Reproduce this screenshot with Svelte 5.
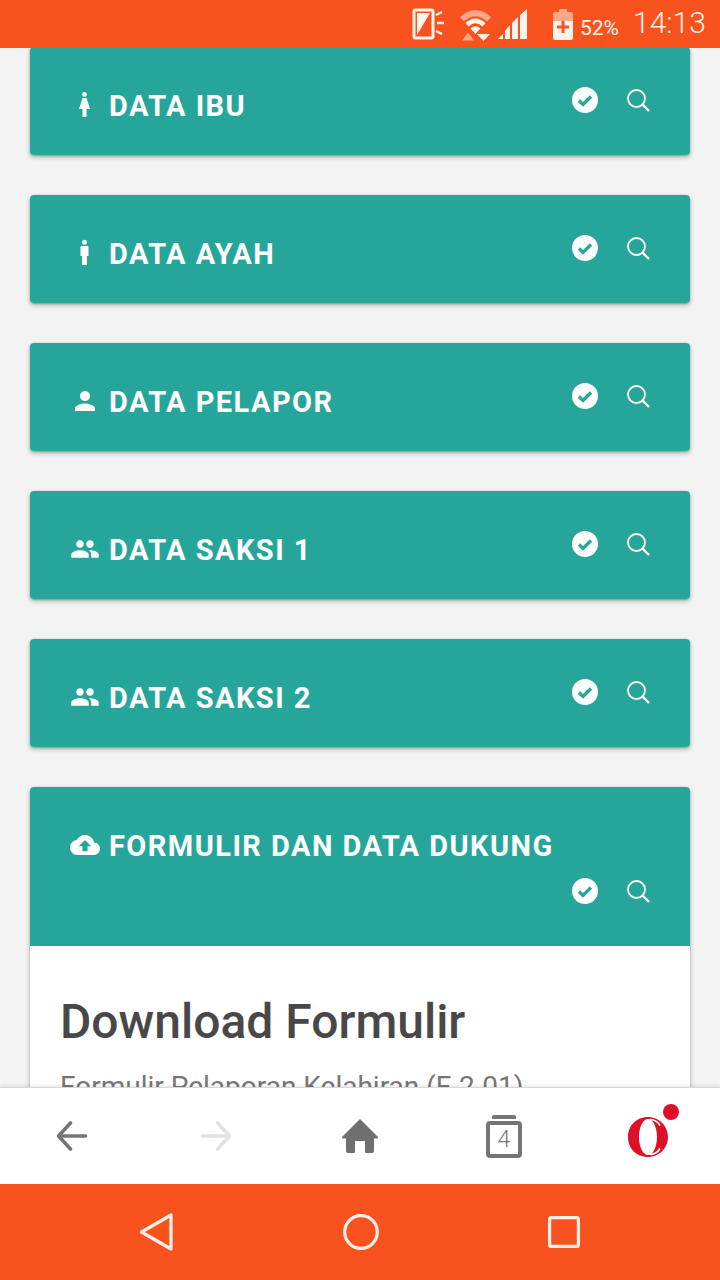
<script>
  const cards = [
    { title: 'DATA IBU', icon: 'female' },
    { title: 'DATA AYAH', icon: 'male' },
    { title: 'DATA PELAPOR', icon: 'person' },
    { title: 'DATA SAKSI 1', icon: 'people' },
    { title: 'DATA SAKSI 2', icon: 'people' },
    { title: 'FORMULIR DAN DATA DUKUNG', icon: 'cloud' }
  ];
  const paths = {
    female: 'M14.500 2a2.400 2.400 0 1 1 0 4.800 2.400 2.400 0 0 1 0-4.800zM12.500 8h4l3.500 11h-3.500V27h-4V19H9z',
    male: 'M14.500 1.800a2.500 2.500 0 1 1 0 5 2.500 2.500 0 0 1 0-5zM11 8h7q.5 0 .5.5V18h-1.500V27h-5V18H10.500V8.500q0-.5.5-.5z',
    person: 'M12 12c2.210 0 4-1.790 4-4s-1.790-4-4-4-4 1.790-4 4 1.790 4 4 4zm0 2c-2.670 0-8 1.340-8 4v2h16v-2c0-2.660-5.330-4-8-4z',
    people: 'M16 11c1.660 0 2.990-1.340 2.990-3S17.660 5 16 5c-1.660 0-3 1.340-3 3s1.340 3 3 3zm-8 0c1.660 0 2.990-1.340 2.990-3S9.660 5 8 5C6.340 5 5 6.340 5 8s1.340 3 3 3zm0 2c-2.330 0-7 1.170-7 3.500V19h14v-2.500c0-2.330-4.670-3.500-7-3.500zm8 0c-.290 0-.620.020-.970.050 1.160.840 1.970 1.970 1.970 3.450V19h6v-2.500c0-2.330-4.670-3.500-7-3.500z',
    cloud: 'M19.350 10.040C18.670 6.590 15.640 4 12 4 9.110 4 6.600 5.640 5.350 8.040 2.340 8.360 0 10.910 0 14c0 3.310 2.690 6 6 6h13c2.760 0 5-2.240 5-5 0-2.640-2.050-4.780-4.650-4.960zM14 13v4h-4v-4H7l5-5 5 5h-3z'
  };
  const box = { female: '0 0 30 30', male: '0 0 30 30', person: '0 0 24 24', people: '0 0 24 24', cloud: '0 0 24 24' };
</script>

<div class="screen">
  <header class="status">
    <svg class="s-rotate" width="33" height="34" viewBox="0 0 33 34">
      <rect x="2" y="3" width="19" height="28" rx="1.500" fill="none" stroke="#fff3ec" stroke-width="3" />
      <path d="M5 28V6h13z" fill="#fff3ec" />
      <path d="M24 8l6-3M25 16h7M24 24l6 3" stroke="#fff3ec" stroke-width="2.400" fill="none" />
    </svg>
    <svg class="s-wifi" width="33" height="34" viewBox="0 0 33 34">
      <path d="M1 10Q16.500 -4 32 10L28 14.500Q16.500 4 5 14.500z" fill="#fda78a" />
      <path d="M6.500 16Q16.500 7 26.500 16L23.500 19.500Q16.500 13 9.500 19.500z" fill="#fff3ec" />
      <path d="M11.500 21.500Q16.500 17 21.500 21.500L16.500 27z" fill="#fff3ec" />
      <path d="M3 33.500L9 25.500L15 33.500z" fill="#fda78a" />
      <path d="M18 27h13l-6.500 7z" fill="#fff3ec" />
    </svg>
    <svg class="s-signal" width="29" height="30" viewBox="0 0 29 30">
      <path d="M0 30L5 25V30zM7 30V22L12 16V30zM14 30V14L20 8V30zM22 30V6L29 0V30z" fill="#fff3ec" />
    </svg>
    <svg class="s-batt" width="20" height="31" viewBox="0 0 20 31">
      <path d="M6 0h8v3h4q2 0 2 2v7H0V5q0-2 2-2h4z" fill="#fda78a" />
      <path d="M0 12h20v17q0 2-2 2H2q-2 0-2-2z" fill="#fff3ec" />
      <path d="M8.500 12h3v4.500H16v3h-4.500V24h-3v-4.500H4v-3h4.500z" fill="#f8531e" />
    </svg>
    <span class="pct">52%</span>
    <span class="time">14:13</span>
  </header>

  <main class="content">
    {#each cards as c}
      <section class="card">
        <div class="head">
          <h2 class="title">
            <span class="t-icon">
              <svg width="30" height="30" viewBox={box[c.icon]}><path d={paths[c.icon]} fill="#fff" /></svg>
            </span>
            <span class="t-text">{c.title}</span>
          </h2>
          <div class="actions">
            <svg width="26" height="26" viewBox="0 0 26 26">
              <circle cx="13" cy="13" r="13" fill="#fff" />
              <path d="M7 13.500L11 17.500l8-8" fill="none" stroke="#26a69a" stroke-width="3.200" />
            </svg>
            <svg class="search" width="26" height="26" viewBox="0 0 26 26">
              <circle cx="11.500" cy="10.500" r="8.500" fill="none" stroke="#fff" stroke-width="1.800" />
              <path d="M17.500 16.500L24 23" stroke="#fff" stroke-width="2.400" />
            </svg>
          </div>
        </div>
        {#if c.icon === 'cloud'}
          <div class="body">
            <h1>Download Formulir</h1>
            <p>Formulir Pelaporan Kelahiran (F-2.01)</p>
          </div>
        {/if}
      </section>
    {/each}
  </main>

  <nav class="browser">
    <svg width="36" height="36" viewBox="0 0 36 36">
      <path d="M31.500 18H5M16.500 5L4.500 18L16.500 31" fill="none" stroke="#757575" stroke-width="3.600" stroke-linecap="round" stroke-linejoin="round" />
    </svg>
    <svg width="36" height="36" viewBox="0 0 36 36">
      <path d="M4.500 18H31M19.500 5L31.500 18L19.500 31" fill="none" stroke="#e2e2e2" stroke-width="3.600" stroke-linecap="round" stroke-linejoin="round" />
    </svg>
    <svg width="38" height="36" viewBox="0 0 38 36">
      <path d="M19 1L37 19q.5 1.500-1 1.500h-3V33q0 2-2 2h-6q-1 0-1-1V23h-10v11q0 1-1 1H7q-2 0-2-2V20.500H2q-1.500 0-1-1.500z" fill="#6f6f6f" />
    </svg>
    <div class="tabs">
      <span class="tab-lid"></span>
      <span class="tab-box">4</span>
    </div>
    <svg class="opera" width="54" height="54" viewBox="0 0 54 54">
      <circle cx="44" cy="8" r="8" fill="#dc1028" />
      <path fill-rule="evenodd" d="M21 13C9 13 1 22 1 33s8 20 20 20c11 0 20-9 20-20S32 13 21 13zM21 15c-5 0-9 8-9 18s4 18 9 18 9-8 9-18-4-18-9-18z" fill="#dc1028" />
      <path d="M23 15.500q7 .5 10 6M23 50.500q7-.5 10-6" fill="none" stroke="#fff" stroke-width="1.600" />
    </svg>
  </nav>

  <footer class="sysnav">
    <svg width="34" height="40" viewBox="0 0 34 40">
      <path d="M2.500 20L32 3V37z" fill="none" stroke="#fff1ea" stroke-width="3.200" stroke-linejoin="round" />
    </svg>
    <svg width="36" height="36" viewBox="0 0 36 36">
      <circle cx="18" cy="18" r="16.300" fill="none" stroke="#fff1ea" stroke-width="3.200" />
    </svg>
    <svg width="32" height="32" viewBox="0 0 32 32">
      <rect x="1.600" y="1.600" width="28.800" height="28.800" rx="2" fill="none" stroke="#fff1ea" stroke-width="3.200" />
    </svg>
  </footer>
</div>

<style>
  :global(body) {
    margin: 0;
    background: #f3f3f3;
  }
  .screen {
    width: 720px;
    height: 1280px;
    display: flex;
    flex-direction: column;
    overflow: hidden;
    font-family: Roboto, "Liberation Sans", sans-serif;
  }
  .status {
    flex: 0 0 48px;
    background: #f8531e;
    display: flex;
    align-items: center;
    color: #fff3ec;
    position: relative;
    z-index: 2;
  }
  .s-rotate { margin-left: 412px; }
  .s-wifi { margin-left: 14px; }
  .s-signal { margin-left: 6px; }
  .s-batt { margin-left: 26px; }
  .pct { margin-left: 7px; margin-top: 9px; font-size: 21px; line-height: 1; width: 38px; }
  .time { margin-left: 15px; font-size: 30px; font-weight: 300; line-height: 1; margin-top: -2px; }
  .content {
    flex: 1 1 0;
    min-height: 0;
    overflow: hidden;
    padding: 0 30px;
    background: #f3f3f3;
  }
  .card {
    margin-bottom: 40px;
    border-radius: 4px;
    background: #fff;
    box-shadow: 0 2px 5px rgba(0, 0, 0, .28), 0 1px 2px rgba(0, 0, 0, .2);
  }
  .card:first-child { margin-top: -1px; }
  .head {
    background: #26a69a;
    border-radius: 4px 4px 0 0;
    padding: 36px 40px 28px;
    display: flex;
    flex-wrap: wrap;
    row-gap: 7px;
    align-items: flex-start;
  }
  .card:not(:last-child) .head { border-radius: 4px; }
  .title {
    margin: 0;
    height: 44px;
    display: flex;
    align-items: center;
    gap: 9px;
    color: #fff;
    font-size: 29px;
    font-weight: 700;
    letter-spacing: 1.45px;
    white-space: nowrap;
  }
  .t-text { padding-top: 1px; }
  .t-icon { width: 30px; height: 30px; display: flex; justify-content: center; }
  .actions {
    height: 44px;
    padding-left: 30px;
    display: flex;
    gap: 27px;
    align-items: flex-start;
    margin-left: auto;
    margin-right: -1px;
  }
  .actions svg { margin-top: 3px; }
  .actions .search { margin-top: 5px; }
  .actions svg:first-child { margin-top: 4px; }
  .body { padding: 49px 30px 30px; }
  .body h1 {
    margin: 0;
    font-size: 48px;
    line-height: 54px;
    font-weight: 500;
    color: #484848;
  }
  .body p {
    margin: 22px 0 0;
    font-size: 28px;
    line-height: 32px;
    color: #777;
  }
  .browser {
    flex: 0 0 96px;
    background: #fff;
    border-top: 1px solid #d8d8d8;
    box-shadow: 0 -2px 3px rgba(0, 0, 0, .08);
    display: grid;
    grid-template-columns: repeat(5, 144px);
    justify-items: center;
    align-items: center;
    position: relative;
  }
  .tabs {
    width: 36px;
    height: 43px;
    display: flex;
    flex-direction: column;
    align-items: center;
    gap: 2px;
  }
  .tab-lid { flex: none; width: 24px; height: 4px; background: #757575; border-radius: 2px 2px 0 0; }
  .tab-box {
    flex: none;
    box-sizing: border-box;
    width: 36px;
    height: 37px;
    border: 4px solid #757575;
    border-radius: 4px;
    color: #757575;
    font-size: 23px;
    font-weight: 300;
    line-height: 29px;
    text-align: center;
  }
  .opera { margin-top: -10px; margin-left: 12px; }
  .sysnav {
    flex: 0 0 96px;
    background: #f8531e;
    display: flex;
    align-items: center;
    justify-content: space-between;
    padding: 0 140px 0 139px;
  }
</style>
